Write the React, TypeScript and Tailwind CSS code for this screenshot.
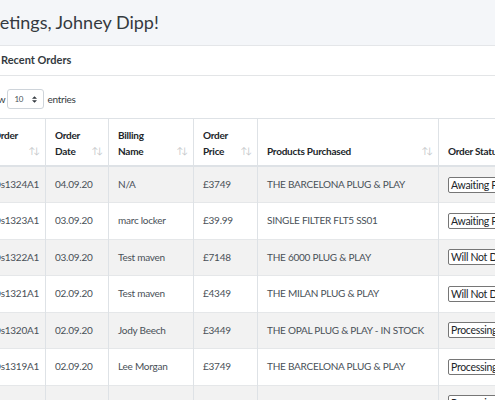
import React from 'react';

const orders = [
  { id: 'Os1324A1', date: '04.09.20', name: 'N/A', price: '£3749', product: 'THE BARCELONA PLUG & PLAY', status: 'Awaiting Payment' },
  { id: 'Os1323A1', date: '03.09.20', name: 'marc locker', price: '£39.99', product: 'SINGLE FILTER FLT5 SS01', status: 'Awaiting Payment' },
  { id: 'Os1322A1', date: '03.09.20', name: 'Test maven', price: '£7148', product: 'THE 6000 PLUG & PLAY', status: 'Will Not Deliver' },
  { id: 'Os1321A1', date: '02.09.20', name: 'Test maven', price: '£4349', product: 'THE MILAN PLUG & PLAY', status: 'Will Not Deliver' },
  { id: 'Os1320A1', date: '02.09.20', name: 'Jody Beech', price: '£3449', product: 'THE OPAL PLUG & PLAY - IN STOCK', status: 'Processing' },
  { id: 'Os1319A1', date: '02.09.20', name: 'Lee Morgan', price: '£3749', product: 'THE BARCELONA PLUG & PLAY', status: 'Processing' },
  { id: 'Os1318A1', date: '01.09.20', name: 'Kathy Hughes', price: '£3749', product: 'THE BARCELONA PLUG & PLAY', status: 'Processing' },
];

function SortIcon() {
  return <span className="text-[9px] leading-none font-normal text-[#c4c7ca] tracking-[-2px]">↑↓</span>;
}

function Th({ lines, last }: { lines: string[]; last?: boolean }) {
  return (
    <th className="border-x border-[#dee2e6] border-b-2 border-b-[#dee2e6] pl-[9px] pr-[7px] pt-[8px] pb-[6px] align-bottom text-left font-bold text-[#212529]">
      <div className="flex items-end justify-between">
        <div className="leading-[16px]">
          {lines.map((l) => (
            <div key={l} className="whitespace-nowrap">{l}</div>
          ))}
        </div>
        {!last && <div className="pb-[1px]"><SortIcon /></div>}
      </div>
    </th>
  );
}

export default function App() {
  return (
    <div className="w-[495px] h-[400px] overflow-hidden bg-white font-['Lato',sans-serif] text-[10px] tracking-[-0.25px] text-[#495057]">
      {/* Page header */}
      <div className="h-[46px] bg-[#f4f6f9] border-b border-[#e4e6e9] flex items-center">
        <h1 className="ml-[-29px] text-[18px] tracking-normal text-[#343a40] whitespace-nowrap">Greetings, Johney Dipp!</h1>
      </div>

      {/* Card */}
      <div className="h-[30px] border-b border-[#e3e5e7] flex items-center">
        <h3 className="ml-[1px] font-bold text-[11px] tracking-normal text-[#343a40]">Recent Orders</h3>
      </div>

      <div className="h-[43px] pt-[4px] border-b border-[#dee2e6] flex items-center text-[10px] text-[#343a40]">
        <span className="ml-[-18px]">Show</span>
        <div className="ml-[2px] w-[37px] h-[20px] border border-[#ced4da] rounded-[3px] flex items-center justify-between px-[6px] text-[8px] text-[#495057]">
          <span>10</span>
          <svg width="5" height="7" viewBox="0 0 6 8">
            <path d="M3 0L6 3H0z M3 8L0 5H6z" fill="#343a40" />
          </svg>
        </div>
        <span className="ml-[3px]">entries</span>
      </div>

      {/* Table */}
      <table className="ml-[-17px] table-fixed border-collapse w-[620px]">
        <colgroup>
          <col className="w-[62px]" />
          <col className="w-[63px]" />
          <col className="w-[85px]" />
          <col className="w-[64px]" />
          <col className="w-[181px]" />
          <col className="w-[165px]" />
        </colgroup>
        <thead>
          <tr className="h-[47px]">
            <Th lines={['Order', '\u00a0']} />
            <Th lines={['Order', 'Date']} />
            <Th lines={['Billing', 'Name']} />
            <Th lines={['Order', 'Price']} />
            <Th lines={['Products Purchased']} />
            <Th lines={['Order Status']} last />
          </tr>
        </thead>
        <tbody>
          {orders.map((o, i) => (
            <tr key={o.id} className={`h-[36.5px] border-b border-[#e5e7e9] ${i % 2 === 0 ? 'bg-[#f2f2f2]' : 'bg-white'}`}>
              <td className="border-x border-[#dee2e6] pl-[9px] whitespace-nowrap">{o.id}</td>
              <td className="border-x border-[#dee2e6] pl-[9px] whitespace-nowrap">{o.date}</td>
              <td className="border-x border-[#dee2e6] pl-[9px] whitespace-nowrap">{o.name}</td>
              <td className="border-x border-[#dee2e6] pl-[9px] whitespace-nowrap">{o.price}</td>
              <td className="border-x border-[#dee2e6] pl-[9px] whitespace-nowrap">{o.product}</td>
              <td className="border-x border-[#dee2e6] pl-[9px] whitespace-nowrap">
                <div className="w-[110px] h-[16px] border border-[#767676] rounded-[2px] bg-white pl-[2px] text-[10.5px] leading-[14px] tracking-[-0.3px] text-[#212529]">
                  {o.status}
                </div>
              </td>
            </tr>
          ))}
        </tbody>
      </table>
    </div>
  );
}
